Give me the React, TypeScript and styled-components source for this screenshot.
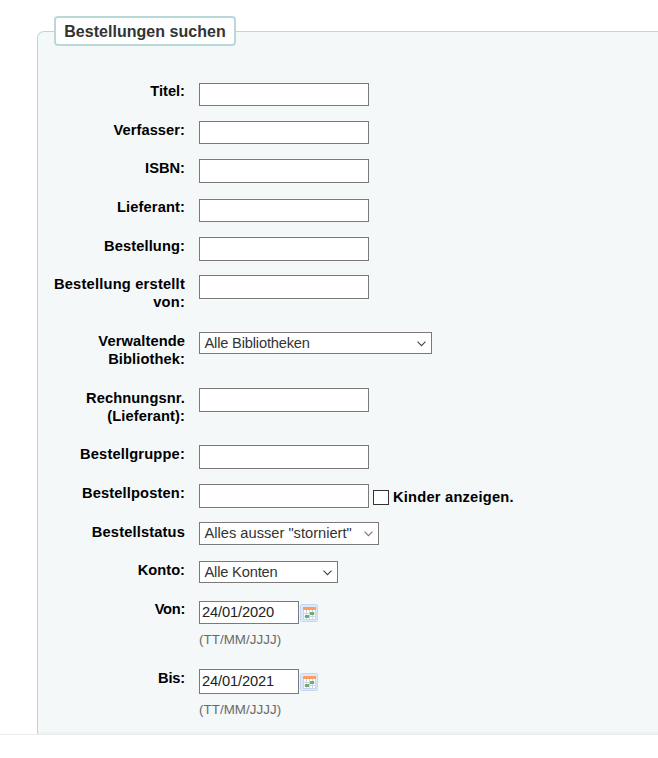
import React from "react";
import styled, { createGlobalStyle } from "styled-components";

const GlobalStyle = createGlobalStyle`
  * { box-sizing: border-box; }
  body {
    margin: 0;
    background: #fff;
    font-family: "Liberation Sans", Arial, sans-serif;
    overflow: hidden;
  }
`;

const Page = styled.main`
  height: 758px;
  padding-top: 16px;
  overflow: hidden;
`;

const Clip = styled.div`
  height: 719px;
  overflow: hidden;
  border-bottom: 1px solid #ececec;
`;

const Panel = styled.section`
  margin: 15px -10px 0 37px;
  height: 703px;
  border: 1px solid #b9d8d9;
  border-bottom: none;
  border-radius: 7px 7px 0 0;
  background: linear-gradient(to top, #eef1f2, #f4f8f9 4px);
`;

const Legend = styled.h1`
  width: 182px;
  height: 30px;
  margin: -16px 0 37px 16px;
  border: 2px solid #b9d8d9;
  border-radius: 4px;
  background: #fff;
  color: #333;
  font-size: 16px;
  letter-spacing: 0.03px;
  line-height: 27px;
  text-align: center;
  white-space: nowrap;
`;

const Row = styled.div<{ $height: number }>`
  display: grid;
  grid-template-columns: 147px 1fr;
  column-gap: 14px;
  height: ${(p) => p.$height}px;
`;

const Label = styled.label<{ $spacing: number }>`
  color: #000;
  font-size: 14.67px;
  font-weight: bold;
  letter-spacing: ${(p) => p.$spacing}px;
  line-height: 17.6px;
  text-align: right;
  white-space: pre;
`;

const Controls = styled.div<{ $shift: number }>`
  display: flex;
  align-items: flex-start;
  margin-top: ${(p) => p.$shift - 1}px;
`;

const TextInput = styled.input<{ $width: number; $height: number }>`
  display: block;
  width: ${(p) => p.$width}px;
  height: ${(p) => p.$height}px;
  margin: 0;
  padding: 0 2px 1px;
  border: 1px solid #7a7a7a;
  border-radius: 0;
  background: #fff;
  color: #222;
  font-family: inherit;
  font-size: 14.67px;
  letter-spacing: -0.13px;
  outline: none;
`;

const SelectBox = styled.button<{ $width: number; $height: number; $spacing: number }>`
  display: flex;
  align-items: center;
  justify-content: space-between;
  width: ${(p) => p.$width}px;
  height: ${(p) => p.$height}px;
  padding: 0 5px 1px 4.5px;
  border: 1px solid #7a7a7a;
  border-radius: 0;
  background: #fff;
  color: #333;
  font-family: inherit;
  font-size: 14.67px;
  letter-spacing: ${(p) => p.$spacing}px;
  white-space: nowrap;
`;

const Arrow = styled.svg`
  display: block;
  flex: none;
  margin-top: 2px;
`;

const CheckLabel = styled.label`
  display: flex;
  gap: 4px;
  margin: 5px 0 0 4px;
  color: #000;
  font-size: 14.67px;
  font-weight: bold;
  letter-spacing: 0.22px;
  line-height: 17px;
  white-space: nowrap;
`;

const Checkbox = styled.input`
  appearance: none;
  width: 16px;
  height: 15px;
  margin: 1px 0 0;
  border: 1px solid #333;
  background: #fff;
`;

const DateColumn = styled.div`
  display: flex;
  flex-direction: column;
`;

const DateLine = styled.div`
  display: flex;
  align-items: flex-end;
  gap: 1px;
`;

const Calendar = styled.svg<{ $lift: number }>`
  display: block;
  margin-bottom: ${(p) => p.$lift}px;
`;

const Hint = styled.span`
  margin-top: 8px;
  color: #696969;
  font-size: 13.33px;
  letter-spacing: 0.06px;
  line-height: 16px;
`;

type Field = {
  label: string;
  spacing?: number;
  height: number;
  shift?: number;
  boxHeight: number;
  select?: { text: string; width: number; spacing: number; color?: string };
  date?: { value: string; lift: number };
  check?: string;
};

const fields: Field[] = [
  { label: "Titel:", height: 39, shift: 1, boxHeight: 23 },
  { label: "Verfasser:", spacing: 0.06, height: 38, boxHeight: 23 },
  { label: "ISBN:", height: 39, boxHeight: 24 },
  { label: "Lieferant:", spacing: 0.12, height: 39, shift: 1, boxHeight: 23 },
  { label: "Bestellung:", spacing: 0.1, height: 38, boxHeight: 24 },
  { label: "Bestellung erstellt\nvon:", spacing: 0.21, height: 57, boxHeight: 24 },
  { label: "Verwaltende\nBibliothek:", spacing: 0.1, height: 57, boxHeight: 22, select: { text: "Alle Bibliotheken", width: 233, spacing: -0.18 } },
  { label: "Rechnungsnr.\n(Lieferant):", spacing: 0.11, height: 56, shift: -1, boxHeight: 24 },
  { label: "Bestellgruppe:", spacing: 0.17, height: 39, boxHeight: 24 },
  { label: "Bestellposten:", spacing: 0.15, height: 39, boxHeight: 24, check: "Kinder anzeigen." },
  { label: "Bestellstatus", spacing: 0.15, height: 38, shift: -1, boxHeight: 23, select: { text: 'Alles ausser "storniert"', width: 180, spacing: 0, color: "#777" } },
  { label: "Konto:", height: 39, boxHeight: 22, select: { text: "Alle Konten", width: 139, spacing: -0.18 } },
  { label: "Von:", spacing: -0.3, height: 69, shift: 1, boxHeight: 23, date: { value: "24/01/2020", lift: 2 } },
  { label: "Bis:", spacing: -0.2, height: 60, boxHeight: 25, date: { value: "24/01/2021", lift: 3 } },
];

function CalendarIcon({ lift }: { lift: number }) {
  return (
    <Calendar $lift={lift} width="18" height="18" viewBox="0 0 18 18">
      <rect x=".5" y=".5" width="17" height="17" rx="1" fill="#dce9f8" stroke="#c3d9f1" />
      <rect x="3" y="6" width="13" height="10" fill="#fff" />
      <path d="M3 9.5h13M3 12.5h13M3 15.5h13M3.5 6v10M6.5 6v10M9.5 6v10M12.5 6v10M15.5 6v10" stroke="#c8d5ea" fill="none" />
      <rect x="3" y="3" width="13" height="3" fill="#ff9d5c" />
      <path d="M10 8h4v3h-4zM5 11h4v3H5z" fill="#71ad70" />
    </Calendar>
  );
}

function Control({ field }: { field: Field }) {
  if (field.select) {
    return (
      <SelectBox type="button" $width={field.select.width} $height={field.boxHeight} $spacing={field.select.spacing}>
        <span>{field.select.text}</span>
        <Arrow width="9" height="6" viewBox="0 0 9 6">
          <path d="M.5 .7l4 4 4-4" fill="none" stroke={field.select.color ?? "#444"} strokeWidth="1.1" />
        </Arrow>
      </SelectBox>
    );
  }
  if (field.date) {
    return (
      <DateColumn>
        <DateLine>
          <TextInput $width={100} $height={field.boxHeight} defaultValue={field.date.value} />
          <CalendarIcon lift={field.date.lift} />
        </DateLine>
        <Hint>(TT/MM/JJJJ)</Hint>
      </DateColumn>
    );
  }
  return (
    <>
      <TextInput $width={170} $height={field.boxHeight} />
      {field.check && (
        <CheckLabel>
          <Checkbox type="checkbox" />
          {field.check}
        </CheckLabel>
      )}
    </>
  );
}

export default function App() {
  return (
    <Page>
      <GlobalStyle />
      <Clip>
        <Panel>
          <Legend>Bestellungen suchen</Legend>
          {fields.map((field) => (
            <Row key={field.label} $height={field.height}>
              <Label $spacing={field.spacing ?? 0}>{field.label}</Label>
              <Controls $shift={field.shift ?? 0}>
                <Control field={field} />
              </Controls>
            </Row>
          ))}
        </Panel>
      </Clip>
    </Page>
  );
}
